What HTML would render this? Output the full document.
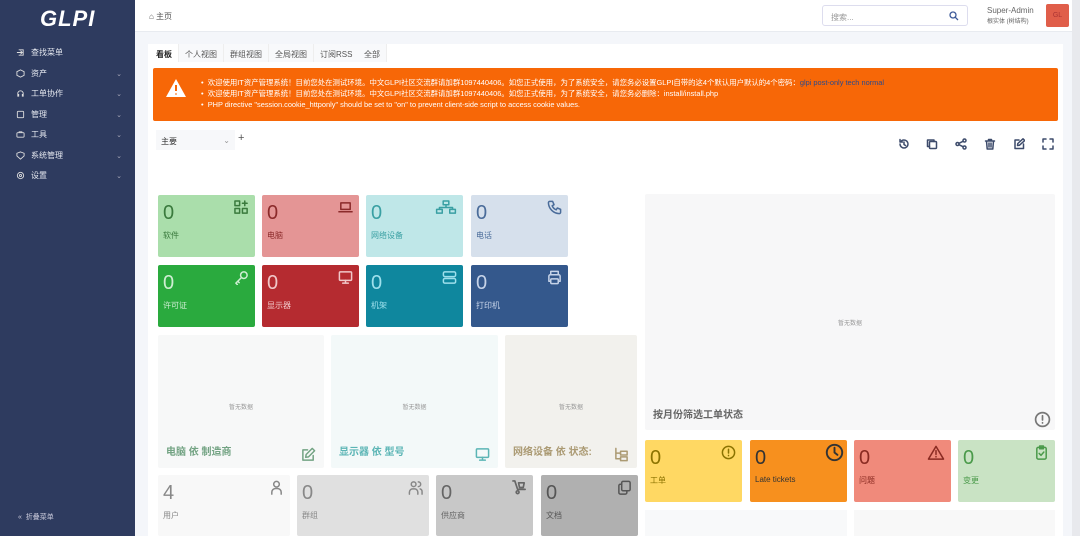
<!DOCTYPE html>
<html><head><meta charset="utf-8"><style>
*{box-sizing:border-box;margin:0;padding:0}
body{width:1080px;height:536px;overflow:hidden;background:#f4f6fa;font-family:"Liberation Sans","Noto Sans CJK SC",sans-serif;position:relative;color:#333}
.abs{position:absolute}
#side{left:0;top:0;width:135px;height:536px;background:#2e3b5f;color:#e6e9f0}
.mi{position:absolute;left:16px;font-size:8px;display:flex;align-items:center;width:110px}
.mi svg{width:9px;height:9px;margin-right:6px}
.mi .ch{position:absolute;right:4px;font-size:7px;color:#aab}
#hdr{left:135px;top:0;width:937px;height:32px;background:#fff;border-bottom:1px solid #e8ebf0}
#panel{left:148px;top:44px;width:915px;height:492px;background:#fff}
.tab{position:absolute;top:44px;height:18px;font-size:8px;color:#555;padding:5px 6px 0;border-right:1px solid #eee;background:#f8f9fb}
.t{position:absolute;border-radius:2px}
.t .n{position:absolute;left:5px;top:7px;font-size:20px;font-weight:300}
.t .l{position:absolute;left:5px;top:35px;font-size:8px}
.t svg{position:absolute;right:6px;top:5px;width:15px;height:15px;fill:none;stroke:currentColor;stroke-width:1.6;stroke-linecap:round;stroke-linejoin:round}
.big{position:absolute;border-radius:2px}
.big .c{position:absolute;width:100%;text-align:center;top:50%;font-size:6px;color:#999}
.big .h{position:absolute;left:8px;bottom:10px;font-size:10px;font-weight:bold}
.big svg{position:absolute;right:8px;bottom:6px;width:15px;height:15px;fill:none;stroke:currentColor;stroke-width:1.6;stroke-linecap:round;stroke-linejoin:round}
.tb svg{position:absolute;top:138px;width:12px;height:12px;fill:none;stroke:#3d4b6b;stroke-width:1.5;stroke-linecap:round;stroke-linejoin:round}
</style></head><body>
<div id="side" class="abs">
 <div class="abs" style="left:40px;top:6px;font-size:22px;font-style:italic;font-weight:bold;color:#fff;letter-spacing:1px">GLPI</div>
 <div class="mi" style="top:47px"><svg viewBox="0 0 10 10" fill="none" stroke="#ddd"><path d="M1 5h6M5 3l2 2-2 2M3 2h5v6H3"/></svg>查找菜单</div>
 <div class="mi" style="top:68px"><svg viewBox="0 0 10 10" fill="none" stroke="#ddd"><path d="M5 1l4 2v4L5 9 1 7V3z"/></svg>资产<span class="ch">⌄</span></div>
 <div class="mi" style="top:88px"><svg viewBox="0 0 10 10" fill="none" stroke="#ddd"><path d="M2 6V5a3 3 0 016 0v1M2 6h1v2H2zM7 6h1v2H7z"/></svg>工单协作<span class="ch">⌄</span></div>
 <div class="mi" style="top:109px"><svg viewBox="0 0 10 10" fill="none" stroke="#ddd"><rect x="1.5" y="1.5" width="7" height="7" rx="1"/></svg>管理<span class="ch">⌄</span></div>
 <div class="mi" style="top:129px"><svg viewBox="0 0 10 10" fill="none" stroke="#ddd"><rect x="1" y="3" width="8" height="5" rx="1"/><path d="M3.5 3V2h3v1"/></svg>工具<span class="ch">⌄</span></div>
 <div class="mi" style="top:150px"><svg viewBox="0 0 10 10" fill="none" stroke="#ddd"><path d="M5 1l4 1.5v3L5 9 1 5.5v-3z"/></svg>系统管理<span class="ch">⌄</span></div>
 <div class="mi" style="top:170px"><svg viewBox="0 0 10 10" fill="none" stroke="#ddd"><circle cx="5" cy="5" r="3.5"/><circle cx="5" cy="5" r="1.2"/></svg>设置<span class="ch">⌄</span></div>
 <div class="mi" style="top:512px;left:18px;font-size:7px;color:#ccd">«&nbsp; 折叠菜单</div>
</div>
<div id="hdr" class="abs">
 <div class="abs" style="left:14px;top:11px;font-size:8px;color:#555">⌂ 主页</div>
 <div class="abs" style="left:687px;top:5px;width:146px;height:21px;border:1px solid #dde;border-radius:3px;font-size:8px;color:#999;padding:6px 8px">搜索...<svg style="position:absolute;right:8px;top:5px" width="10" height="10" viewBox="0 0 10 10" fill="none" stroke="#3d5a99" stroke-width="1.3"><circle cx="4" cy="4" r="3"/><path d="M6.3 6.3L9 9"/></svg></div>
 <div class="abs" style="left:852px;top:6px;font-size:8px;color:#666">Super-Admin</div>
 <div class="abs" style="left:852px;top:16px;font-size:6px;color:#666">根实体 (树结构)</div>
 <div class="abs" style="left:911px;top:4px;width:23px;height:23px;background:#e05e4a;border-radius:2px;font-size:7px;color:#a33;text-align:center;line-height:23px">GL</div>
</div>
<div class="abs" style="left:1072px;top:0;width:8px;height:536px;background:#e8e9ed"></div>
<div id="panel" class="abs"></div>
<div class="tab" style="left:150px;background:#fff;color:#222;font-weight:bold">看板</div>
<div class="tab" style="left:179px">个人视图</div>
<div class="tab" style="left:224px">群组视图</div>
<div class="tab" style="left:269px">全局视图</div>
<div class="tab" style="left:314px">订阅RSS</div>
<div class="tab" style="left:358px">全部</div>
<div class="abs" style="left:153px;top:68px;width:905px;height:53px;background:#f76707;border-radius:2px;color:#fff;font-size:7.4px;line-height:11px;padding:9px 0 0 48px">
 <svg class="abs" style="left:12px;top:10px" width="22" height="20" viewBox="0 0 22 20"><path d="M11 1L21 19H1z" fill="#fff"/><path d="M11 7v6M11 15.5v1" stroke="#f76707" stroke-width="2"/></svg>
 <div>•&nbsp; 欢迎使用IT资产管理系统！目前您处在测试环境。中文GLPI社区交流群请加群1097440406。如您正式使用，为了系统安全，请您务必设置GLPI自带的这4个默认用户默认的4个密码：<span style="color:#2b4a8c">glpi post-only tech normal</span></div>
 <div>•&nbsp; 欢迎使用IT资产管理系统！目前您处在测试环境。中文GLPI社区交流群请加群1097440406。如您正式使用，为了系统安全，请您务必删除：install/install.php</div>
 <div>•&nbsp; PHP directive "session.cookie_httponly" should be set to "on" to prevent client-side script to access cookie values.</div>
</div>
<div class="abs" style="left:156px;top:130px;width:79px;height:20px;background:#f7f8fa;font-size:8px;padding:6px 5px">主要<span style="float:right;color:#999">⌄</span></div>
<div class="abs" style="left:238px;top:132px;font-size:11px;color:#555">+</div>
<div class="tb">
<svg style="left:898px" viewBox="0 0 12 12"><path d="M2 6a4 4 0 104-4 4 4 0 00-3.5 2M2 1.5v2.5h2.5M6 4v2.5l1.5 1"/></svg>
<svg style="left:926px" viewBox="0 0 12 12"><rect x="3.5" y="3.5" width="7" height="7" rx="1"/><path d="M8 3.5V2H1.5v6.5h2"/></svg>
<svg style="left:955px" viewBox="0 0 12 12"><circle cx="2.5" cy="6" r="1.5"/><circle cx="9.5" cy="2.5" r="1.5"/><circle cx="9.5" cy="9.5" r="1.5"/><path d="M4 5.3l4-2M4 6.7l4 2"/></svg>
<svg style="left:984px" viewBox="0 0 12 12"><path d="M1.5 3h9M4.5 3V1.5h3V3M2.5 3l.7 8h5.6l.7-8M5 5v4M7 5v4"/></svg>
<svg style="left:1013px" viewBox="0 0 12 12"><path d="M6 2H2v8.5h8.5V6M4.5 7.5l.3-2L10 .8l1.7 1.7L6.5 7.2z"/></svg>
<svg style="left:1042px" viewBox="0 0 12 12"><path d="M1 4V1h3M8 1h3v3M11 8v3H8M4 11H1V8"/></svg>
</div>

<div class="t" style="left:158px;top:195px;width:97px;height:62px;background:#aadeab;color:#3a7a3d"><span class="n">0</span><span class="l">软件</span><svg viewBox="0 0 16 16"><rect x="1" y="1" width="5" height="5"/><rect x="1" y="9" width="5" height="5"/><rect x="9" y="9" width="5" height="5"/><path d="M11.5 1v5M9 3.5h5"/></svg></div>
<div class="t" style="left:262px;top:195px;width:97px;height:62px;background:#e49595;color:#8b2a2a"><span class="n">0</span><span class="l">电脑</span><svg viewBox="0 0 16 16"><rect x="3" y="3" width="10" height="7"/><path d="M1 12.5h14"/></svg></div>
<div class="t" style="left:366px;top:195px;width:97px;height:62px;background:#bfe7e8;color:#3aa0a3"><span class="n">0</span><span class="l">网络设备</span><svg style="width:22px" viewBox="0 0 22 16"><rect x="8" y="1" width="6" height="4"/><rect x="1" y="10" width="6" height="4"/><rect x="15" y="10" width="6" height="4"/><path d="M11 5v3M4 10V8h14v2"/></svg></div>
<div class="t" style="left:471px;top:195px;width:97px;height:62px;background:#d6e0ec;color:#4a6c9a"><span class="n">0</span><span class="l">电话</span><svg viewBox="0 0 16 16"><path d="M3 1.5h3l1.5 3.5-2 1.2a8 8 0 004.3 4.3l1.2-2 3.5 1.5v3A1.5 1.5 0 0113 14.5 12 12 0 011.5 3 1.5 1.5 0 013 1.5"/></svg></div>
<div class="t" style="left:158px;top:265px;width:97px;height:62px;background:#2aaa3e;color:#cfeed3"><span class="n">0</span><span class="l">许可证</span><svg viewBox="0 0 16 16"><circle cx="10.5" cy="5.5" r="3.5"/><path d="M8 8L2 14l1.5 1.5M4 12l1.5 1.5"/></svg></div>
<div class="t" style="left:262px;top:265px;width:97px;height:62px;background:#b52b30;color:#f1c7c8"><span class="n">0</span><span class="l">显示器</span><svg viewBox="0 0 16 16"><rect x="1.5" y="2" width="13" height="9" rx="1"/><path d="M5 14h6M8 11v3"/></svg></div>
<div class="t" style="left:366px;top:265px;width:97px;height:62px;background:#0f879e;color:#9ee0ec"><span class="n">0</span><span class="l">机架</span><svg viewBox="0 0 16 16"><rect x="1.5" y="2" width="13" height="5" rx="1.5"/><rect x="1.5" y="9" width="13" height="5" rx="1.5"/></svg></div>
<div class="t" style="left:471px;top:265px;width:97px;height:62px;background:#34588c;color:#c6d3e8"><span class="n">0</span><span class="l">打印机</span><svg viewBox="0 0 16 16"><path d="M4 5V1.5h8V5M4 12H2V6.5A1.5 1.5 0 013.5 5h9A1.5 1.5 0 0114 6.5V12h-2"/><rect x="4" y="9.5" width="8" height="5" rx="1"/></svg></div>
<div class="big" style="left:158px;top:335px;width:166px;height:133px;background:#f7f8f8;color:#73a383"><span class="c">暂无数据</span><span class="h">电脑 依 制造商</span><svg viewBox="0 0 16 16"><path d="M7 3H2v11h11V9M5 11l.5-3L12 1.5 14.5 4 8 10.5z"/></svg></div>
<div class="big" style="left:331px;top:335px;width:167px;height:133px;background:#f3f9f9;color:#5bb5b5"><span class="c">暂无数据</span><span class="h">显示器 依 型号</span><svg viewBox="0 0 16 16"><rect x="1.5" y="2" width="13" height="9" rx="1"/><path d="M5 14h6M8 11v3"/></svg></div>
<div class="big" style="left:505px;top:335px;width:132px;height:133px;background:#f2f1ed;color:#ab9a73"><span class="c">暂无数据</span><span class="h">网络设备 依 状态:</span><svg viewBox="0 0 16 16"><path d="M2 1.5v11h5M2 6.5h5"/><rect x="7" y="4.5" width="7" height="4"/><rect x="7" y="10.5" width="7" height="4"/></svg></div>
<div class="t" style="left:158px;top:475px;width:132px;height:61px;background:#f8f8f8;color:#888"><span class="n">4</span><span class="l">用户</span><svg viewBox="0 0 16 16"><circle cx="8" cy="4.5" r="3"/><path d="M3 15v-2a4 4 0 014-4h2a4 4 0 014 4v2"/></svg></div>
<div class="t" style="left:297px;top:475px;width:132px;height:61px;background:#e0e0e0;color:#888"><span class="n">0</span><span class="l">群组</span><svg viewBox="0 0 16 16"><circle cx="6" cy="4.5" r="2.5"/><path d="M1.5 15v-2a3.5 3.5 0 013.5-3.5h2A3.5 3.5 0 0110.5 13v2M11 2a2.5 2.5 0 010 5M13 9.5a3 3 0 012 3V15"/></svg></div>
<div class="t" style="left:436px;top:475px;width:97px;height:61px;background:#c8c8c8;color:#666"><span class="n">0</span><span class="l">供应商</span><svg viewBox="0 0 16 16" style="stroke-width:1.8"><path d="M1 1h2l3 9h8M7 3h6l-1 5H8z"/><circle cx="6" cy="13" r="1.5"/></svg></div>
<div class="t" style="left:541px;top:475px;width:97px;height:61px;background:#b0b0b0;color:#555"><span class="n">0</span><span class="l">文档</span><svg viewBox="0 0 16 16"><rect x="5" y="1.5" width="9" height="10" rx="1.5"/><path d="M5 4.5H3.5A1.5 1.5 0 002 6v7.5A1.5 1.5 0 003.5 15H9a1.5 1.5 0 001.5-1.5v-2"/></svg></div>
<div class="big" style="left:645px;top:194px;width:410px;height:236px;background:#f7f7f8;color:#555"><span class="c" style="top:124px">暂无数据</span><span class="h" style="bottom:9px;color:#666">按月份筛选工单状态</span><svg style="width:17px;height:17px;right:4px;bottom:2px;color:#777" viewBox="0 0 16 16"><circle cx="8" cy="8" r="6.5"/><path d="M8 4.5v4M8 11v.3"/></svg></div>
<div class="t" style="left:645px;top:440px;width:97px;height:62px;background:#ffd863;color:#8c7300"><span class="n">0</span><span class="l">工单</span><svg viewBox="0 0 16 16"><circle cx="8" cy="8" r="6.5"/><path d="M8 4.5v4M8 11v.3"/></svg></div>
<div class="t" style="left:750px;top:440px;width:97px;height:62px;background:#f7901e;color:#333"><span class="n">0</span><span class="l">Late tickets</span><svg style="width:19px;height:19px;right:3px;top:3px" viewBox="0 0 16 16"><circle cx="8" cy="8" r="6.5"/><path d="M8 4v4l2.5 2"/></svg></div>
<div class="t" style="left:854px;top:440px;width:97px;height:62px;background:#f08a7b;color:#8a2b22"><span class="n">0</span><span class="l">问题</span><svg style="width:18px" viewBox="0 0 18 16"><path d="M9 1.5L17 15H1z M9 6v4M9 12.3v.3"/></svg></div>
<div class="t" style="left:958px;top:440px;width:97px;height:62px;background:#c9e3c4;color:#4a9a4a"><span class="n">0</span><span class="l">变更</span><svg viewBox="0 0 16 16"><rect x="3" y="2.5" width="10" height="12.5" rx="1.5"/><rect x="6" y="1" width="4" height="3"/><path d="M5.5 9l2 2 3-3.5"/></svg></div>
<div class="abs" style="left:645px;top:510px;width:202px;height:26px;background:#f8f9fa"></div>
<div class="abs" style="left:854px;top:510px;width:201px;height:26px;background:#f8f8f8"></div>
</body></html>
